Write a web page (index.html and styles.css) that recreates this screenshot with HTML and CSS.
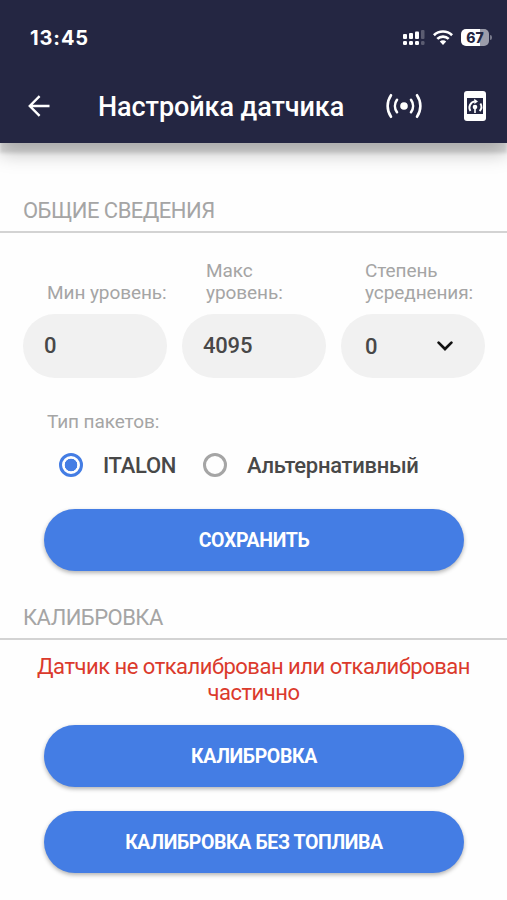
FILE: index.html
```html
<!DOCTYPE html>
<html lang="ru">
<head>
  <meta charset="UTF-8">
  <meta name="viewport" content="width=device-width, initial-scale=1.0">
  <title>Настройка датчика</title>
  <link rel="stylesheet" href="styles.css">
</head>
<body>
  <header class="header">
    <div class="status-bar">
      <span class="time">13:45</span>
      <div class="status-icons">
        <svg class="signal" width="22" height="16" viewBox="0 0 22 16" fill="#fff">
          <rect x="0" y="4" width="4" height="5" rx="1"/>
          <rect x="6" y="3" width="4" height="6" rx="1"/>
          <rect x="12" y="1.5" width="4" height="7.5" rx="1"/>
          <rect x="18" y="0" width="3.5" height="9" rx="1" opacity=".25"/>
          <rect x="0" y="11" width="4" height="4" rx="1.3"/>
          <rect x="6" y="11" width="4" height="4" rx="1.3"/>
          <rect x="12" y="11" width="4" height="4" rx="1.3"/>
          <rect x="18" y="11" width="3.5" height="4" rx="1.3" opacity=".25"/>
        </svg>
        <svg class="wifi" width="20" height="15" viewBox="0 0 20 15" fill="none" stroke="#fff" stroke-width="2.7">
          <path d="M.9 5.2a13 13 0 0 1 18.2 0"/>
          <path d="M4.3 8.9a8.2 8.2 0 0 1 11.4 0"/>
          <path d="M10 14.9l-3.2-3.3a4.6 4.6 0 0 1 6.4 0z" fill="#fff" stroke="none"/>
        </svg>
        <div class="battery"><span>67</span></div>
      </div>
    </div>
    <div class="toolbar">
      <svg class="back" width="22" height="22" viewBox="0 0 22 22" fill="none" stroke="#fff" stroke-width="2.4">
        <path d="M21.5 11H2M11.6 1.2L1.8 11l9.8 9.8"/>
      </svg>
      <h1>Настройка датчика</h1>
      <svg class="sensor" width="38" height="26" viewBox="0 0 38 26" fill="none" stroke="#fff" stroke-width="2.6" stroke-linecap="round">
        <circle cx="19" cy="13" r="3.8" fill="#fff" stroke="none"/>
        <path d="M6 2.2a19 19 0 0 0 0 21.6M32 2.2a19 19 0 0 1 0 21.6"/>
        <path d="M12 6.8a10.5 10.5 0 0 0 0 12.4M26 6.8a10.5 10.5 0 0 1 0 12.4"/>
      </svg>
      <svg class="device" width="22" height="30" viewBox="0 0 22 30" fill="none">
        <rect width="22" height="30" rx="3" fill="#fff"/>
        <rect x="3" y="7" width="16" height="16" fill="#242642"/>
        <path d="M6.4 20a6.3 6.3 0 0 1 4.4-9.6M15.6 20a6.3 6.3 0 0 0 .8-7.6" stroke="#fff" stroke-width="1.9"/>
        <path d="M10.2 7.8l3.8 2.6-3.6 2.6z" fill="#fff"/>
        <circle cx="11" cy="16" r="2.3" fill="#fff"/>
        <path d="M11 16v6" stroke="#fff" stroke-width="1.6"/>
      </svg>
    </div>
  </header>

  <main>
    <h2 class="section-title">ОБЩИЕ СВЕДЕНИЯ</h2>
    <div class="fields">
      <div class="field">
        <label>Мин уровень:</label>
        <div class="input">0</div>
      </div>
      <div class="field">
        <label>Макс<br>уровень:</label>
        <div class="input">4095</div>
      </div>
      <div class="field">
        <label>Степень<br>усреднения:</label>
        <div class="input select">
          0
          <svg width="16" height="10" viewBox="0 0 16 10" fill="none" stroke="#111" stroke-width="2.7" stroke-linecap="round">
            <path d="M1.6 1.6L8 8l6.4-6.4"/>
          </svg>
        </div>
      </div>
    </div>

    <div class="packet-label">Тип пакетов:</div>
    <div class="radios">
      <span class="radio checked"></span>
      <span class="radio-text italon">ITALON</span>
      <span class="radio"></span>
      <span class="radio-text">Альтернативный</span>
    </div>
    <button class="btn">СОХРАНИТЬ</button>

    <h2 class="section-title calibration">КАЛИБРОВКА</h2>
    <p class="error">Датчик не откалиброван или откалиброван<br>частично</p>
    <button class="btn">КАЛИБРОВКА</button>
    <button class="btn last">КАЛИБРОВКА БЕЗ ТОПЛИВА</button>
  </main>
</body>
</html>
```
FILE: styles.css
```css
* {
  box-sizing: border-box;
}

body {
  margin: 0;
  height: 900px;
  overflow: hidden;
  font-family: Roboto, sans-serif;
  background-color: #fefefe;
}

.header {
  height: 143px;
  color: #fff;
  background-color: #242642;
  box-shadow: 0 10px 3px rgba(60, 60, 65, 0.16), 0 10px 18px rgba(0, 0, 0, 0.26);
}

.status-bar {
  display: flex;
  justify-content: space-between;
  align-items: center;
  height: 75px;
  padding: 0 18px 0 30px;
}

.time {
  font-family: Inter, sans-serif;
  font-size: 20px;
  font-weight: 700;
  letter-spacing: 0.9px;
}

.status-icons {
  display: flex;
  align-items: center;
}

.wifi {
  margin: 0 8px;
}

.battery {
  position: relative;
  width: 28px;
  height: 17px;
  border-radius: 5px;
  background: linear-gradient(to right, #fff 67%, #9b9caa 67%);
  color: #242642;
  font-family: Inter, sans-serif;
  font-size: 14px;
  font-weight: 800;
  line-height: 17px;
  text-align: center;
}

.battery::after {
  content: "";
  position: absolute;
  right: -3px;
  top: 6px;
  width: 2px;
  height: 5px;
  border-radius: 0 2px 2px 0;
  background: #77788a;
}

.toolbar {
  display: flex;
  align-items: center;
  height: 62px;
  padding: 0 21px 0 28px;
}

.toolbar h1 {
  width: 287px;
  margin: 2px 0 0 48px;
  font-size: 27px;
  font-weight: 500;
  letter-spacing: -0.08px;
  white-space: nowrap;
}

.toolbar svg {
  flex: none;
}

.device {
  margin-left: auto;
}

.section-title {
  height: 90px;
  margin: 0;
  padding: 55px 0 0 23px;
  border-bottom: 2px solid #d3d3d3;
  color: #a5a5a5;
  font-size: 22px;
  font-weight: 400;
  letter-spacing: -0.52px;
  line-height: 26px;
}

.section-title.calibration {
  height: 69px;
  padding-top: 34px;
}

.fields {
  display: grid;
  grid-template-columns: repeat(3, 144px);
  gap: 15px;
  padding: 27px 23px 0;
}

.field {
  display: flex;
  flex-direction: column;
  justify-content: flex-end;
}

.field label {
  padding-left: 24px;
  color: #a5a5a5;
  font-size: 19px;
  letter-spacing: -0.08px;
  line-height: 22px;
  white-space: nowrap;
}

.input {
  display: flex;
  align-items: center;
  height: 64px;
  margin-top: 10px;
  padding: 0 32px 2px 21px;
  border-radius: 32px;
  background-color: #f1f1f1;
  color: #484848;
  font-size: 22px;
  font-weight: 500;
  letter-spacing: -0.2px;
}

.select {
  justify-content: space-between;
  padding: 0 32px 0 24px;
}

.packet-label {
  margin: 33px 0 0 47px;
  color: #a5a5a5;
  font-size: 19px;
  letter-spacing: -0.1px;
  line-height: 22px;
}

.radios {
  display: flex;
  align-items: center;
  height: 64px;
  padding-left: 59px;
  color: #484848;
  font-size: 22px;
  font-weight: 500;
  letter-spacing: -0.3px;
}

.radio {
  width: 24px;
  height: 24px;
  border: 3px solid #a5a5a5;
  border-radius: 50%;
}

.radio.checked {
  border-color: #447de4;
  background: radial-gradient(circle, #447de4 6px, transparent 6.6px);
}

.radio-text {
  margin-left: 20px;
}

.italon {
  width: 100px;
}

.btn {
  display: block;
  width: 420px;
  height: 62px;
  margin: 12px 0 0 44px;
  padding: 0;
  border: none;
  border-radius: 31px;
  background-color: #447de4;
  box-shadow: 0 2px 4px rgba(0, 0, 0, 0.3);
  color: #fff;
  font-family: Roboto, sans-serif;
  font-size: 19.5px;
  font-weight: 700;
  letter-spacing: -0.38px;
}

.btn.last {
  margin-top: 24px;
}

.error {
  margin: 14px 0 19px;
  color: #db3a2c;
  font-size: 22px;
  letter-spacing: -0.5px;
  line-height: 26px;
  text-align: center;
}
```
